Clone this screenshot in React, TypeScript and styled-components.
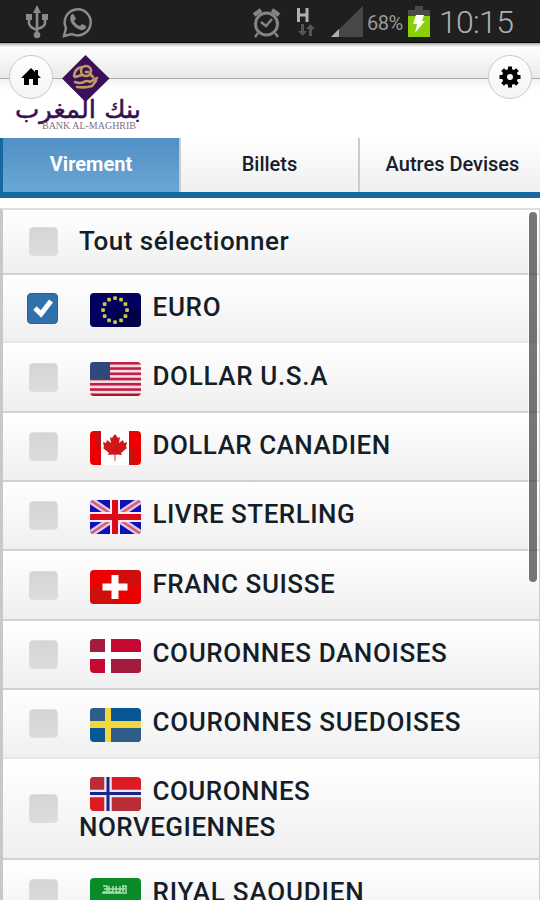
import React from 'react';
import styled, { createGlobalStyle } from 'styled-components';

const GlobalStyle = createGlobalStyle`
  * { box-sizing: border-box; }
  body { margin: 0; background: #fff; }
`;

const Screen = styled.main`
  width: 540px;
  height: 900px;
  overflow: hidden;
  display: flex;
  flex-direction: column;
  background: #fff;
  color: #141e29;
  font-family: Roboto, sans-serif;
  font-weight: 500;
`;

const StatusBar = styled.div`
  flex: none;
  height: 43px;
  display: flex;
  justify-content: space-between;
  background: #1f1f1f;
  border-bottom: 1px solid #050505;
`;

const StatusGroup = styled.div`
  display: flex;
  align-items: flex-start;
`;

const StatusIcon = styled.svg<{ $left: number; $top: number }>`
  flex: none;
  display: block;
  margin: ${p => p.$top}px 0 0 ${p => p.$left}px;
`;

const Percent = styled.span`
  width: 39px;
  margin: 10px 0 0 4px;
  font-size: 20px;
  line-height: 26px;
  font-weight: 400;
  letter-spacing: -0.5px;
  color: #999;
`;

const Clock = styled.span`
  width: 101px;
  margin: 3px 0 0 9px;
  font-size: 32px;
  line-height: 38px;
  font-weight: 300;
  letter-spacing: -0.7px;
  color: #b0b0b0;
`;

const Header = styled.header`
  flex: none;
  height: 95px;
  display: flex;
  align-items: flex-start;
  background:
    linear-gradient(#aaa, #fff0) 0 0 / 100% 4px no-repeat,
    linear-gradient(#fff 0, #fafafa 10px, #e9e9e7 35px, #aeaeac 35px, #aeaeac 36px, #f2f2f2 36px, #fff 47px);
`;

const RoundButton = styled.button<{ $left: number }>`
  flex: none;
  width: 44px;
  height: 44px;
  margin: 12px 0 0 ${p => p.$left}px;
  padding: 0;
  display: grid;
  place-items: center;
  border: 1.5px solid #cacaca;
  border-radius: 50%;
  background: linear-gradient(#fff, #f4f4f4);
`;

const Logo = styled.svg`
  flex: none;
  display: block;
  width: 140px;
  height: 84px;
  margin: 10px 0 0 -43px;
  pointer-events: none;
`;

const Tabs = styled.nav`
  flex: none;
  height: 60px;
  display: grid;
  grid-template-columns: 181px 179px 180px;
  border-bottom: 6px solid #1569a0;
`;

const Tab = styled.button<{ $active?: boolean }>`
  padding: 0 0 2px;
  border: 0;
  border-left: ${p => (p.$active ? '3px solid #1768a0' : '0')};
  border-right: 2px solid #ccc;
  font: 500 20px/24px Roboto, sans-serif;
  color: ${p => (p.$active ? '#fff' : '#16202a')};
  font-weight: ${p => (p.$active ? 700 : 500)};
  background: ${p => (p.$active ? 'linear-gradient(#528fc5, #69a7d3)' : 'linear-gradient(#fff, #efefef)')};
  &:last-child { border-right: 0; padding-left: 5px; }
`;

const ListArea = styled.section`
  position: relative;
  flex: none;
  height: 692px;
  margin-top: 10px;
  overflow: hidden;
  border-left: 3px solid #c8c8c8;
  border-right: 1px solid #ccc;
  border-top: 2px solid #dedede;
`;

const Row = styled.label<{ $height: number; $light?: boolean }>`
  display: grid;
  grid-template-columns: 24px 52px 400px;
  height: ${p => p.$height}px;
  align-items: center;
  border-bottom: 2px solid ${p => (p.$light ? '#e8e8e8' : '#d1d1d1')};
  background: linear-gradient(#fff, #f9f9f9 40%, #efefef);
`;

const CheckBox = styled.span<{ $checked?: boolean }>`
  grid-column: 2;
  width: ${p => (p.$checked ? 31 : 29)}px;
  height: ${p => (p.$checked ? 31 : 29)}px;
  margin: 0 0 0 ${p => (p.$checked ? 0 : 2)}px;
  display: grid;
  place-items: center;
  border-radius: 4px;
  border: 1px solid ${p => (p.$checked ? '#2b6191' : '#dedede')};
  background: ${p => (p.$checked ? '#3071ab' : 'linear-gradient(#d5d5d5, #dcdcdc)')};
`;

const Label = styled.span<{ $top?: number; $spacing?: number }>`
  align-self: start;
  padding-top: ${p => p.$top ?? 14}px;
  font-size: 26px;
  line-height: 36px;
  letter-spacing: ${p => p.$spacing ?? 0.48}px;
`;

const FlagImage = styled.svg`
  width: 51px;
  height: 34px;
  margin: 0 11.500px -4px 11px;
  vertical-align: -7px;
  border-radius: 4px;
`;

const ScrollThumb = styled.div`
  position: absolute;
  top: 2px;
  right: 2px;
  width: 8px;
  height: 370px;
  border-radius: 4px;
  background: rgba(70, 70, 70, 0.74);
  box-shadow: 0 0 0 1px rgba(255, 255, 255, 0.6);
`;

const starAngles = Array.from({ length: 12 }, (_, i) => (i * Math.PI) / 6);

const flags: Record<string, React.ReactNode> = {
  eu: (
    <>
      <path fill="#02005f" d="M0 0h51v34H0z" />
      <path fill="#00003e" d="M26 34V17h25v17z" opacity=".7" />
      {starAngles.map(a => (
        <rect key={a} x={23.2 + 12 * Math.sin(a)} y={15.2 - 12 * Math.cos(a)} width="3.7" height="3.7" rx="1" fill="#c8c83f" />
      ))}
    </>
  ),
  us: (
    <>
      <path fill="#f6dce2" d="M0 0h51v34H0z" />
      {[0, 1, 2, 3, 4, 5, 6].map(i => (
        <rect key={i} y={i * 5.25} width="51" height="2.6" fill={i === 6 ? '#b01324' : '#c21e45'} />
      ))}
      <path fill="#31497a" d="M0 0h20v17.5H0z" />
    </>
  ),
  ca: (
    <>
      <path fill="#fff" d="M0 0h51v34H0z" />
      <path fill="#ed0000" d="M0 0h11v34H0zM39 0h12v34H39z" />
      <path fill="#bd1517" d="M5 0h6v17H5zM39 18h7v16h-7z" opacity=".8" />
      <path fill="#cd1719" d="m25 3 3 4 2-1-1 6 4-3 1 3 3-1-1 5 1 1-6 5 1 2-5-.5-2 .5-2-.5-5 .5 1-2-6-5 1-1-1-5 3 1 1-3 4 3-1-6 2 1z" />
      <path stroke="#ef9a9c" strokeWidth="2" d="M25 24v6" />
    </>
  ),
  gb: (
    <>
      <path fill="#1010b8" d="M0 0h51v34H0z" />
      <path stroke="#dcc8ed" strokeWidth="7" d="m0 0 51 34M51 0 0 34" />
      <path stroke="#de5c6f" strokeWidth="2.5" d="m0 0 51 34M51 0 0 34" />
      <path stroke="#fbe9ef" strokeWidth="10" d="M25 0v34M0 17h51" />
      <path stroke="#d90b16" strokeWidth="6" d="M25 0v34M0 17h51" />
    </>
  ),
  ch: (
    <>
      <path fill="#ed0000" d="M0 0h51v34H0z" />
      <path fill="#bf1515" d="M25 0h26v17H25zM0 17h25v17H0z" opacity=".65" />
      <path fill="#fff" d="M21.5 5h7v8.500h9v7h-9V29h-7v-8.500h-9v-7h9z" />
    </>
  ),
  dk: (
    <>
      <path fill="#c40932" d="M0 0h51v34H0z" />
      <path fill="#a31c3d" d="M0 0h15v13H0zM21 20h30v14H21z" />
      <path fill="#fff" d="M15 0h6v13h30v7H21v14h-6V20H0v-7h15z" />
    </>
  ),
  se: (
    <>
      <path fill="#075795" d="M0 0h51v34H0z" />
      <path fill="#2e5e87" d="M0 0h15v13H0zM21 20h30v14H21z" />
      <path fill="#f2d63b" d="M15 0h6v13h30v7H21v14h-6V20H0v-7h15z" />
    </>
  ),
  no: (
    <>
      <path fill="#dc1b23" d="M0 0h51v34H0z" />
      <path fill="#b92e36" d="M0 0h15v13H0zM21 20h30v14H21z" />
      <path stroke="#ece7f5" strokeWidth="7.500" d="M18 0v34M0 16.500h51" />
      <path stroke="#18258b" strokeWidth="3" d="M18 0v34M0 16.500h51" />
    </>
  ),
  sa: (
    <>
      <path fill="#098c27" d="M0 0h51v34H0z" />
      <path fill="none" stroke="#a9dfb1" strokeWidth="1.500" d="M13 8h4v6h-4m6-6v6h4V8m3 0v6h4V8m3 0v6m-1-6h4v6M12 15h25M14 11h21" />
      <path stroke="#c7e9c9" strokeWidth="1.500" d="M16 25h20" />
    </>
  ),
};

const currencies: { code: string; name: string; height: number; light?: boolean; checked?: boolean; spacing?: number; top?: number }[] = [
  { code: 'eu', name: 'EURO', height: 68, light: true, checked: true, spacing: 0.7 },
  { code: 'us', name: 'DOLLAR U.S.A', height: 70, spacing: 0.65, top: 15 },
  { code: 'ca', name: 'DOLLAR CANADIEN', height: 69 },
  { code: 'gb', name: 'LIVRE STERLING', height: 69 },
  { code: 'ch', name: 'FRANC SUISSE', height: 70, spacing: 0.55, top: 15 },
  { code: 'dk', name: 'COURONNES DANOISES', height: 69, spacing: 0.62 },
  { code: 'se', name: 'COURONNES SUEDOISES', height: 69, light: true, spacing: 0.68 },
  { code: 'no', name: 'COURONNES NORVEGIENNES', height: 101 },
  { code: 'sa', name: 'RIYAL SAOUDIEN', height: 69, spacing: 0.8 },
];

const UsbIcon = () => (
  <StatusIcon $left={26} $top={5} width="22" height="34" viewBox="0 0 22 34" fill="none" stroke="#8b8b8b" strokeWidth="2.600">
    <path d="M11 6v24M3 13v5q0 4 8 7M19 13v5q0 4-8 6" />
    <path fill="#8b8b8b" stroke="none" d="m11 0 4 8H7zM0 9h6v6H0zM16 9h6v6h-6z" />
    <circle cx="11" cy="30" r="3.300" fill="#8b8b8b" stroke="none" />
  </StatusIcon>
);

const WhatsAppIcon = () => (
  <StatusIcon $left={14} $top={7} width="31" height="31" viewBox="0 0 31 31" fill="none" stroke="#8b8b8b">
    <path strokeWidth="2.500" d="m2 29 2-8A13 13 0 1 1 10 27z" />
    <path fill="#8b8b8b" stroke="none" d="M9 8q2-2 3 0l2 4-2 2q2 4 6 5l2-2 4 2q1 1-1 3-4 3-10-2-7-6-4-12z" />
  </StatusIcon>
);

const AlarmIcon = () => (
  <StatusIcon $left={0} $top={7} width="29" height="31" viewBox="0 0 29 31" fill="none" stroke="#858585">
    <circle cx="14.500" cy="17" r="11" strokeWidth="3" />
    <path strokeWidth="2.500" d="m9 15 5 4 6-7M6 26l-3 4M23 26l3 4" />
    <path strokeWidth="4" d="m2 8 7-5M27 8l-7-5" />
  </StatusIcon>
);

const NetworkIcon = () => (
  <StatusIcon $left={15} $top={7} width="21" height="31" viewBox="0 0 21 31">
    <path stroke="#b0b0b0" strokeWidth="3" d="M2.500 1v14M11 1v14M2 8h9" />
    <path fill="#555" d="M5 17h3v7h3l-4.500 5L2 24h3zM13 29h3v-7h3l-4.500-5-4.500 5h3z" />
  </StatusIcon>
);

const SignalIcon = () => (
  <StatusIcon $left={14} $top={6} width="32" height="31" viewBox="0 0 32 31">
    <path fill="#484848" d="M0 31 32 0v31z" />
    <path fill="#b0b0b0" d="m0 31 8-8v8z" />
  </StatusIcon>
);

const BatteryIcon = () => (
  <StatusIcon $left={2} $top={6} width="22" height="31" viewBox="0 0 22 31">
    <path fill="#4a4a4a" d="M7 0h8v4h7v6H0V4h7z" />
    <path fill="#8bcf06" d="M0 10h22v21H0z" />
    <path fill="#fff" d="M8 9h8l-2 6h3L7 27l2-9H5z" />
  </StatusIcon>
);

const HomeIcon = () => (
  <svg width="20" height="18" viewBox="0 0 20 18">
    <path fill="#000" d="m10 0 4 4V2h3v5l3 3h-3v7h-5v-6H8v6H3v-7H0z" />
  </svg>
);

const GearIcon = () => (
  <svg width="22" height="22" viewBox="-11 -11 22 22">
    <circle r="5.500" fill="none" stroke="#000" strokeWidth="5" />
    {[0, 45, 90, 135].map(a => (
      <path key={a} transform={`rotate(${a})`} fill="#000" d="M-2-10.500h4V-6h-4zM-2 6h4v4.500h-4z" />
    ))}
  </svg>
);

const BankLogo = () => (
  <Logo viewBox="0 0 140 84">
    <path fill="#3a1158" d="M75.500 2 99.500 25.500 75.500 49 52 25.500z" />
    <g fill="none" stroke="#c09a60" strokeLinecap="round" strokeWidth="2.600">
      <circle cx="76" cy="18" r="5" />
      <path d="M76 19h2M64 23q1-8 8-9M65 24l7-2M80 21l3 3M65 29q5 2 9 0 3-2 6 0l7-4M67 34q9 1 15-1l4-5" />
    </g>
    <text x="131" y="65" direction="rtl" fontFamily="DejaVu Sans, sans-serif" fontSize="25" fill="#361052" stroke="#361052" strokeWidth=".5" textLength="126" lengthAdjust="spacingAndGlyphs">بنك المغرب</text>
    <text x="32" y="76" fontFamily="Liberation Serif, serif" fontSize="11" fill="#806f85" textLength="94" lengthAdjust="spacingAndGlyphs">BANK AL-MAGHRIB</text>
  </Logo>
);

export default function App() {
  return (
    <Screen>
      <GlobalStyle />
      <StatusBar>
        <StatusGroup>
          <UsbIcon />
          <WhatsAppIcon />
        </StatusGroup>
        <StatusGroup>
          <AlarmIcon />
          <NetworkIcon />
          <SignalIcon />
          <Percent>68%</Percent>
          <BatteryIcon />
          <Clock>10:15</Clock>
        </StatusGroup>
      </StatusBar>
      <Header>
        <RoundButton $left={9} aria-label="Accueil"><HomeIcon /></RoundButton>
        <BankLogo />
        <RoundButton $left={338} aria-label="Réglages"><GearIcon /></RoundButton>
      </Header>
      <Tabs>
        <Tab $active>Virement</Tab>
        <Tab>Billets</Tab>
        <Tab>Autres Devises</Tab>
      </Tabs>
      <ListArea>
        <Row $height={65}>
          <CheckBox />
          <Label $top={13}>Tout sélectionner</Label>
        </Row>
        {currencies.map(c => (
          <Row key={c.code} $height={c.height} $light={c.light}>
            <CheckBox $checked={c.checked}>
              {c.checked && (
                <svg width="20" height="19" viewBox="0 0 20 19">
                  <path fill="none" stroke="#fff" strokeWidth="5" d="m2 9 6 6L18 2" />
                </svg>
              )}
            </CheckBox>
            <Label $spacing={c.spacing} $top={c.top}>
              <FlagImage viewBox="0 0 51 34">{flags[c.code]}</FlagImage>
              {c.name}
            </Label>
          </Row>
        ))}
        <ScrollThumb />
      </ListArea>
    </Screen>
  );
}
